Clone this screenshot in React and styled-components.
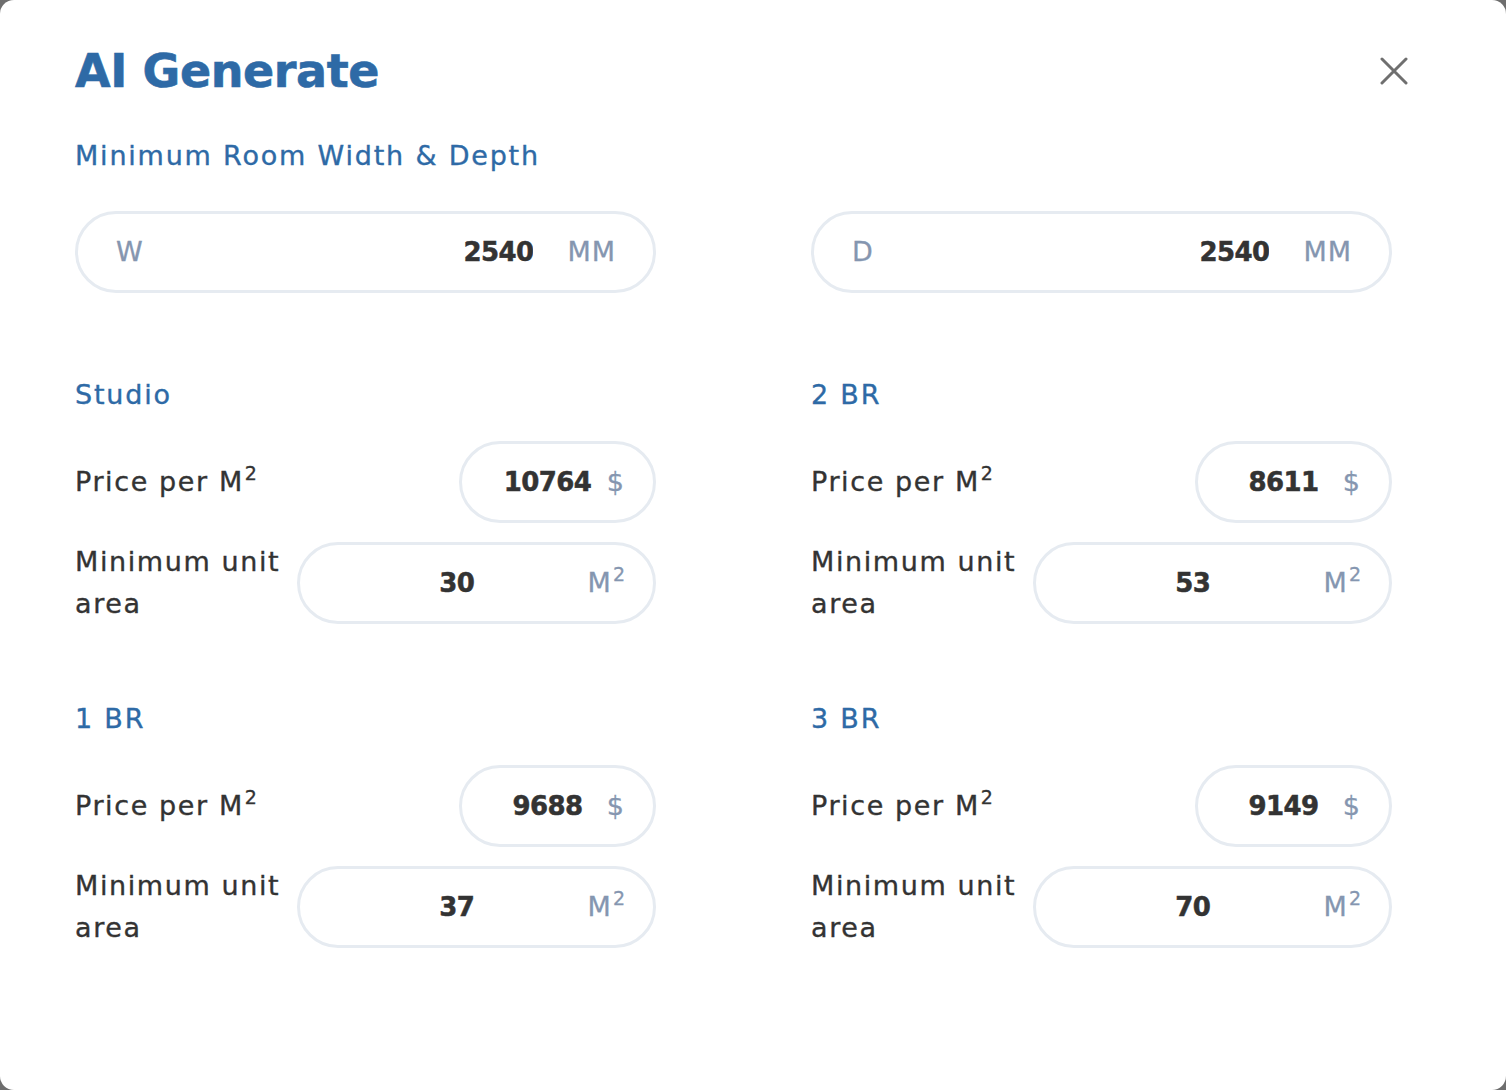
import React from "react";
import styled, { createGlobalStyle } from "styled-components";

const GlobalStyle = createGlobalStyle`
  html, body {
    margin: 0;
    padding: 0;
    background: #6e6e6e;
  }
  * {
    box-sizing: border-box;
  }
`;

const Modal = styled.div`
  width: 1506px;
  height: 1090px;
  background: #fff;
  border-radius: 14px;
  padding: 43px 114px 0 75px;
  font-family: "DejaVu Sans", "Liberation Sans", sans-serif;
  color: #333;
`;

const Header = styled.div`
  display: flex;
  align-items: center;
  justify-content: space-between;
  height: 56px;
`;

const Title = styled.h1`
  margin: 0;
  font-size: 46px;
  line-height: 56px;
  font-weight: 700;
  letter-spacing: -0.4px;
  color: #2e6aa6;
  -webkit-text-stroke: 0.6px #2e6aa6;
`;

const CloseButton = styled.button`
  display: flex;
  align-items: center;
  justify-content: center;
  width: 28px;
  height: 28px;
  margin-right: -16px;
  padding: 0;
  border: none;
  background: none;
  cursor: pointer;
`;

const SectionTitle = styled.h2`
  margin: ${({ $mt }) => ($mt ? `${$mt}px` : 0)} 0 0;
  font-size: 27px;
  line-height: 32px;
  font-weight: 400;
  letter-spacing: 1.8px;
  color: #2e6aa6;
  -webkit-text-stroke: 0.35px #2e6aa6;
`;

const DimensionRow = styled.div`
  display: grid;
  grid-template-columns: 581px 581px;
  column-gap: 155px;
  margin-top: 39px;
`;

const Field = styled.label`
  display: flex;
  align-items: center;
  height: 82px;
  width: ${({ $width }) => ($width ? `${$width}px` : "100%")};
  padding: 0 ${({ $pr }) => $pr}px 0 ${({ $pl }) => $pl}px;
  gap: ${({ $gap }) => $gap}px;
  border: 3px solid #e6ebf1;
  border-radius: 41px;
  background: #fff;
  flex-shrink: 0;
`;

const FieldPrefix = styled.span`
  font-size: 27px;
  line-height: 32px;
  letter-spacing: 1px;
  color: #8596b0;
  -webkit-text-stroke: 0.3px #8596b0;
`;

const ValueInput = styled.input`
  flex: 1;
  min-width: 0;
  border: none;
  outline: none;
  background: transparent;
  padding: 0;
  font-family: inherit;
  font-size: 26px;
  line-height: 32px;
  font-weight: 700;
  letter-spacing: -0.6px;
  color: #333;
  text-align: ${({ $align }) => $align || "center"};
  -webkit-text-stroke: 0.5px #333;
`;

const Unit = styled.span`
  font-size: 27px;
  line-height: 32px;
  letter-spacing: 1px;
  color: #8596b0;
  white-space: nowrap;
  -webkit-text-stroke: 0.3px #8596b0;

  sup {
    font-size: 19px;
    line-height: 0;
    letter-spacing: 0;
    vertical-align: 11px;
    margin-left: 1px;
  }
`;

const Grid = styled.div`
  display: grid;
  grid-template-columns: 581px 581px;
  column-gap: 155px;
  row-gap: 78px;
  margin-top: 86px;
`;

const UnitBlock = styled.div`
  display: flex;
  flex-direction: column;
`;

const Rows = styled.div`
  display: flex;
  flex-direction: column;
  gap: 18px;
  margin-top: 30px;
`;

const Row = styled.div`
  display: flex;
  align-items: center;
  justify-content: space-between;
  gap: 14px;
`;

const RowLabel = styled.span`
  font-size: 27px;
  line-height: 42px;
  letter-spacing: 1.6px;
  color: #333;
  white-space: nowrap;
  -webkit-text-stroke: 0.35px #333;

  sup {
    font-size: 19px;
    line-height: 0;
    letter-spacing: 0;
    vertical-align: 11px;
    margin-left: 1px;
  }
`;

const units = [
  { name: "Studio", price: "10764", area: "30" },
  { name: "2 BR", price: "8611", area: "53" },
  { name: "1 BR", price: "9688", area: "37" },
  { name: "3 BR", price: "9149", area: "70" },
];

function CloseIcon() {
  return (
    <svg width="28" height="28" viewBox="0 0 28 28" fill="none">
      <path
        d="M2 2L26 26M26 2L2 26"
        stroke="#6f6f6f"
        strokeWidth="3"
        strokeLinecap="round"
      />
    </svg>
  );
}

function DimensionField({ prefix, value }) {
  return (
    <Field $pl={38} $pr={37} $gap={34}>
      <FieldPrefix>{prefix}</FieldPrefix>
      <ValueInput defaultValue={value} $align="right" />
      <Unit>MM</Unit>
    </Field>
  );
}

function UnitSettings({ name, price, area }) {
  return (
    <UnitBlock>
      <SectionTitle>{name}</SectionTitle>
      <Rows>
        <Row>
          <RowLabel>
            Price per M<sup>2</sup>
          </RowLabel>
          <Field $width={197} $pl={37} $pr={28} $gap={11}>
            <ValueInput defaultValue={price} />
            <Unit>$</Unit>
          </Field>
        </Row>
        <Row>
          <RowLabel>
            Minimum unit
            <br />
            area
          </RowLabel>
          <Field $width={359} $pl={37} $pr={28} $gap={11}>
            <ValueInput defaultValue={area} />
            <Unit>
              M<sup>2</sup>
            </Unit>
          </Field>
        </Row>
      </Rows>
    </UnitBlock>
  );
}

export default function App() {
  return (
    <>
      <GlobalStyle />
      <Modal>
        <Header>
          <Title>AI Generate</Title>
          <CloseButton aria-label="Close">
            <CloseIcon />
          </CloseButton>
        </Header>
        <SectionTitle $mt={41}>Minimum Room Width &amp; Depth</SectionTitle>
        <DimensionRow>
          <DimensionField prefix="W" value="2540" />
          <DimensionField prefix="D" value="2540" />
        </DimensionRow>
        <Grid>
          {units.map((u) => (
            <UnitSettings key={u.name} {...u} />
          ))}
        </Grid>
      </Modal>
    </>
  );
}
